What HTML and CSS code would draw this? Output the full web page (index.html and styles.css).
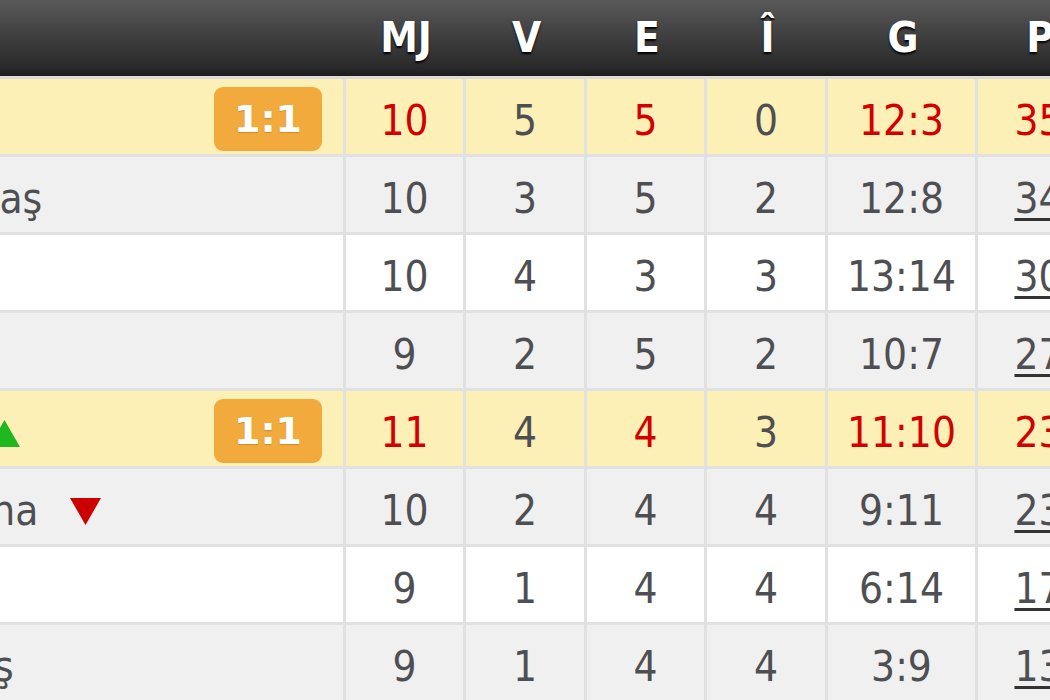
FILE: index.html
```html
<!DOCTYPE html>
<html lang="ro">
<head>
<meta charset="utf-8">
<title>Clasament</title>
<link rel="stylesheet" href="styles.css">
</head>
<body>
<div class="standings">
  <div class="row head">
    <div class="cell name"></div>
    <div class="cell">MJ</div>
    <div class="cell">V</div>
    <div class="cell">E</div>
    <div class="cell">Î</div>
    <div class="cell">G</div>
    <div class="cell">P</div>
  </div>

  <div class="row live">
    <div class="cell name"><span class="rank">1.</span><span class="team">Astra Giurgiu</span><span class="badge">1:1</span></div>
    <div class="cell red">10</div>
    <div class="cell">5</div>
    <div class="cell red">5</div>
    <div class="cell">0</div>
    <div class="cell red">12:3</div>
    <div class="cell red">35</div>
  </div>

  <div class="row odd">
    <div class="cell name"><span class="rank">2.</span><span class="team">Gaz Metan Mediaş</span></div>
    <div class="cell">10</div>
    <div class="cell">3</div>
    <div class="cell">5</div>
    <div class="cell">2</div>
    <div class="cell">12:8</div>
    <div class="cell"><a class="pts" href="#">34</a></div>
  </div>

  <div class="row even">
    <div class="cell name"><span class="rank">3.</span><span class="team">Petrolul Ploieşti</span></div>
    <div class="cell">10</div>
    <div class="cell">4</div>
    <div class="cell">3</div>
    <div class="cell">3</div>
    <div class="cell">13:14</div>
    <div class="cell"><a class="pts" href="#">30</a></div>
  </div>

  <div class="row odd">
    <div class="cell name"><span class="rank">4.</span><span class="team">FC Botoşani</span></div>
    <div class="cell">9</div>
    <div class="cell">2</div>
    <div class="cell">5</div>
    <div class="cell">2</div>
    <div class="cell">10:7</div>
    <div class="cell"><a class="pts" href="#">27</a></div>
  </div>

  <div class="row live">
    <div class="cell name"><span class="rank">5.</span><span class="team">Poli Timişoara</span>
      <svg class="trend" width="31" height="27" viewBox="0 0 31 27"><polygon points="15.5,0 31,27 0,27" fill="#1fb81f"/></svg>
      <span class="badge">1:1</span></div>
    <div class="cell red">11</div>
    <div class="cell">4</div>
    <div class="cell red">4</div>
    <div class="cell">3</div>
    <div class="cell red">11:10</div>
    <div class="cell red">23</div>
  </div>

  <div class="row odd">
    <div class="cell name"><span class="rank">6.</span><span class="team">Concordia Chiajna</span>
      <svg class="trend" width="31" height="27" viewBox="0 0 31 27"><polygon points="0,0 31,0 15.5,27" fill="#cc0000"/></svg></div>
    <div class="cell">10</div>
    <div class="cell">2</div>
    <div class="cell">4</div>
    <div class="cell">4</div>
    <div class="cell">9:11</div>
    <div class="cell"><a class="pts" href="#">23</a></div>
  </div>

  <div class="row even">
    <div class="cell name"><span class="rank">7.</span><span class="team">FC Vaslui</span></div>
    <div class="cell">9</div>
    <div class="cell">1</div>
    <div class="cell">4</div>
    <div class="cell">4</div>
    <div class="cell">6:14</div>
    <div class="cell"><a class="pts" href="#">17</a></div>
  </div>

  <div class="row odd">
    <div class="cell name"><span class="rank">8.</span><span class="team">ASA Târgu Mureş</span></div>
    <div class="cell">9</div>
    <div class="cell">1</div>
    <div class="cell">4</div>
    <div class="cell">4</div>
    <div class="cell">3:9</div>
    <div class="cell"><a class="pts" href="#">13</a></div>
  </div>
</div>
</body>
</html>
```

FILE: styles.css
```css
html, body {
  margin: 0;
  padding: 0;
  width: 1050px;
  height: 700px;
  overflow: hidden;
  background: #ffffff;
}

body {
  font-family: "DejaVu Sans Condensed", "DejaVu Sans", Tahoma, sans-serif;
  font-stretch: condensed;
  color: #4e4f52;
}

.standings {
  margin-left: -400px;
  width: 1502px;
}

.row {
  display: grid;
  grid-template-columns: 746px 120px 121px 120px 121px 150px 124px;
  height: 78px;
  box-sizing: border-box;
  border-bottom: 3px solid #e1e1e1;
}

.row.head {
  height: 79px;
  background: linear-gradient(#595959 0%, #3b3b3b 55%, #2a2a2a 88%, #1c1c1c 100%);
  border-bottom: 3px solid #dcdcdc;
}

.row.live { background: #fcf0b7; }
.row.odd { background: #f0f0f0; }
.row.even { background: #ffffff; }

.cell {
  box-sizing: border-box;
  height: 75px;
  padding-top: 11px;
  line-height: 62px;
  font-size: 42px;
  text-align: center;
  border-right: 3px solid #e1e1e1;
  white-space: nowrap;
  overflow: hidden;
}

.head .cell {
  height: 76px;
  padding-top: 0;
  line-height: 76px;
  font-size: 42px;
  font-weight: bold;
  color: #ffffff;
  text-shadow: 0 2px 2px #000000;
  border-right: none;
}

.cell.red { color: #d30000; }

.cell.name {
  display: flex;
  align-items: flex-start;
  text-align: left;
  padding-top: 0;
  padding-left: 35px;
}

.rank {
  width: 60px;
  padding-top: 11px;
  flex: none;
}

.team {
  padding-top: 11px;
  flex: none;
}

.trend {
  flex: none;
  margin-top: 29px;
  margin-left: 32px;
}

.badge {
  flex: none;
  margin-left: auto;
  margin-right: 21px;
  margin-top: 8px;
  width: 108px;
  height: 64px;
  border-radius: 9px;
  background: #f2aa3c;
  color: #ffffff;
  font-family: "DejaVu Sans", Tahoma, sans-serif;
  font-stretch: normal;
  font-weight: bold;
  font-size: 38px;
  line-height: 64px;
  text-align: center;
  text-shadow: 0 1px 1px rgba(150, 80, 0, 0.35);
}

.pts {
  color: #4e4f52;
  text-decoration: underline;
  text-decoration-thickness: 3px;
  text-underline-offset: 5px;
  text-decoration-color: #333333;
}
```
